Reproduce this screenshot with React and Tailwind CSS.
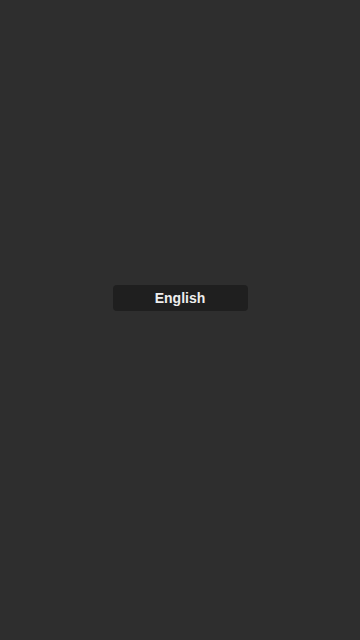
import React from 'react';

const App = () => {
    return (
        <div className="min-h-screen bg-[#2e2e2e] flex flex-col items-center pt-[285px]" style={{ fontFamily: '"Liberation Sans", Arial, sans-serif' }}>
            {/* Language button */}
            <button className="w-[135px] h-[26px] rounded-[4px] bg-[#1f1f1f] text-[#eeeeee] text-[14px] font-bold flex items-center justify-center pt-[1px]">
                English
            </button>
        </div>
    );
};

export default App;
